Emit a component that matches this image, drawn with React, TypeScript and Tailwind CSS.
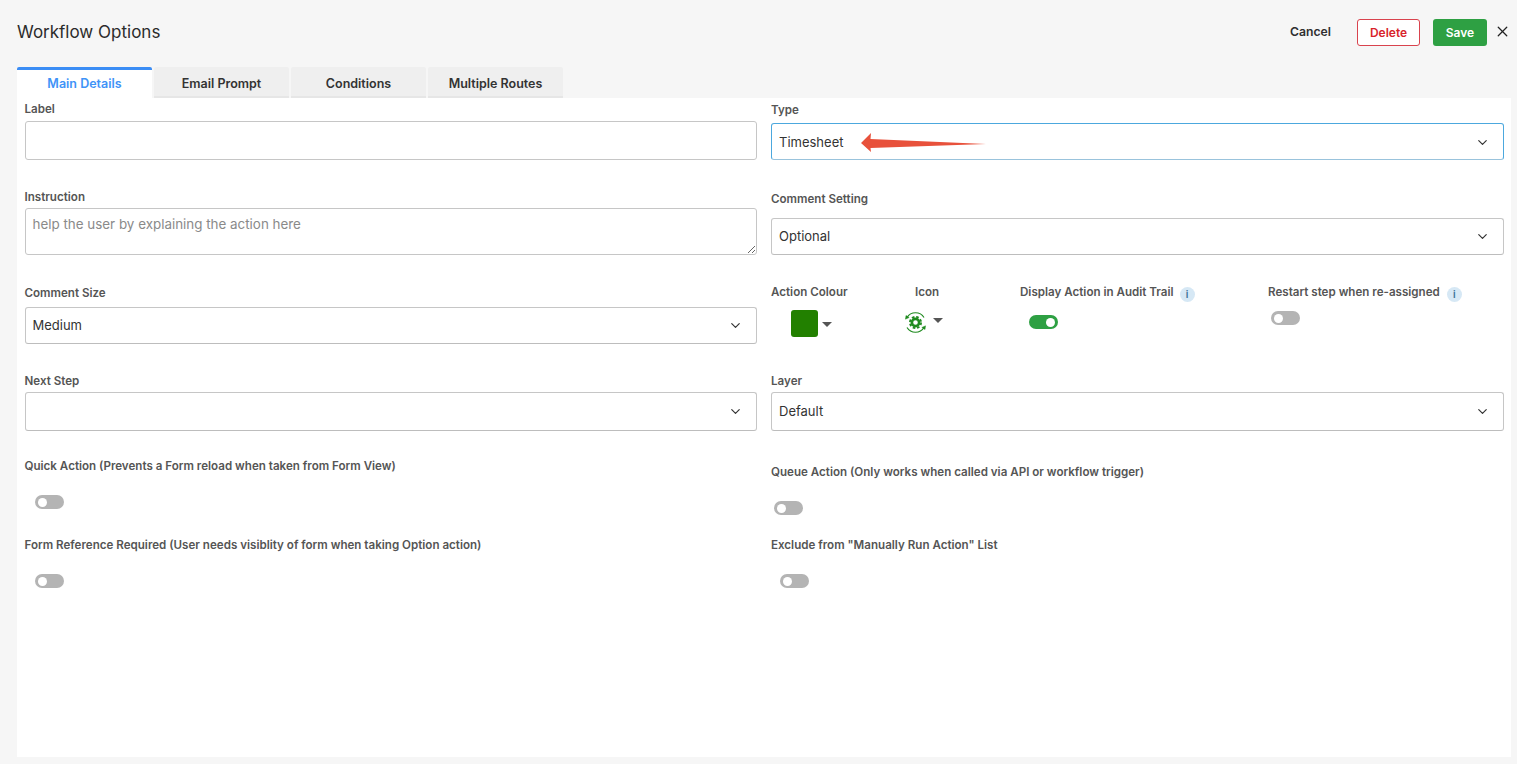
import { ChevronDown, X } from "lucide-react";

const Label = ({ children, className = "" }: { children: React.ReactNode; className?: string }) => (
  <div className={`h-4 text-[11.6px] leading-4 font-semibold text-[#555555] whitespace-nowrap ${className}`}>{children}</div>
);

const Select = ({ value, className = "border-[#c6c6c6] border-b-[#bdbdbd]" }: { value?: string; className?: string }) => (
  <div className={`flex h-full items-center justify-between rounded-[3px] border bg-white pl-[7px] pr-[13px] text-[13px] text-[#333333] ${className}`}>
    <span>{value}</span>
    <ChevronDown size={15} strokeWidth={1.9} className="text-[#333333]" />
  </div>
);

const Toggle = ({ on = false, className = "" }: { on?: boolean; className?: string }) => (
  <div className={`flex h-[14px] w-[29px] items-center rounded-full px-[3px] ${on ? "justify-end bg-[#2ea043]" : "justify-start bg-[#b4b4b4]"} ${className}`}>
    <div className="h-[9px] w-[9px] rounded-full bg-white" />
  </div>
);

const Info = ({ className = "" }: { className?: string }) => (
  <span className={`flex h-[15px] w-[15px] items-center justify-center rounded-full bg-[#d6e8f5] text-[10px] font-semibold text-[#3a6f96] ${className}`}>i</span>
);

const Caret = ({ className = "" }: { className?: string }) => (
  <div className={`h-0 w-0 border-x-[5px] border-t-[5px] border-x-transparent border-t-[#555555] ${className}`} />
);

const GearCycle = () => (
  <svg width="22" height="24" viewBox="0 0 22 24" fill="none" stroke="#1f8a1f">
    <circle cx="10.5" cy="11.5" r="3.6" strokeWidth="2.6" />
    <circle cx="10.5" cy="11.5" r="5.6" strokeWidth="1.8" strokeDasharray="2.6 1.8" />
    <path d="M2 6.5A10 10 0 0 1 19 6.5" strokeWidth="1.2" />
    <path d="M19 16.5A10 10 0 0 1 2 16.5" strokeWidth="1.2" />
    <path d="M0.4 8.2L1 4.4L4.2 6.6Z" fill="#1f8a1f" strokeWidth="0.4" />
    <path d="M20.6 14.8L20 18.6L16.8 16.4Z" fill="#1f8a1f" strokeWidth="0.4" />
  </svg>
);

const tabs = ["Email Prompt", "Conditions", "Multiple Routes"];

export default function App() {
  return (
    <div className="flex h-screen w-full flex-col overflow-hidden bg-[#f6f6f6] pb-[7px] pl-[17px] pr-[6px] font-['Inter',sans-serif]">
      <header className="flex h-[67px] shrink-0 items-start justify-between">
        <h1 className="mt-[21px] text-[17px] leading-[22px] font-normal text-[#2b2b2b]">Workflow Options</h1>
        <div className="mt-[19px] flex items-start">
          <button className="mr-[26px] h-[27px] text-[12.2px] font-semibold text-[#2f2f2f]">Cancel</button>
          <button className="mr-[13px] h-[27px] w-[63px] rounded-[3px] border border-[#d9434e] bg-white text-[12px] font-semibold text-[#d8232a]">Delete</button>
          <button className="mr-[7px] h-[27px] w-[54px] rounded-[3px] bg-[#2ea043] text-[12px] font-semibold text-white">Save</button>
          <X size={17} strokeWidth={1.8} className="mt-[4px] text-[#222222]" />
        </div>
      </header>

      <nav className="flex h-[31px] shrink-0 items-start gap-[2px]">
        <div className="flex h-[31px] w-[135px] items-center justify-center rounded-t-[2px] border-t-[3px] border-[#3b8df5] bg-white text-[12.5px] font-semibold text-[#3f93f7]">
          Main Details
        </div>
        {tabs.map((t) => (
          <div key={t} className="flex h-[31px] w-[135px] items-center justify-center rounded-t-[2px] border-b-2 border-[#e6e6e6] bg-[#efefef] pt-[5px] text-[12.5px] font-semibold text-[#333333]">
            {t}
          </div>
        ))}
      </nav>

      <main className="flex flex-1 gap-[14px] bg-white pl-[7.5px] pr-[7px]">
        {/* left column */}
        <section className="w-[732.5px] pt-[3px]">
          <Label>Label</Label>
          <input className="mt-[4px] block h-[39px] w-full rounded-[3px] border border-[#c6c6c6] bg-white" />

          <Label className="mt-[29px]">Instruction</Label>
          <textarea
            placeholder="help the user by explaining the action here"
            className="mt-[3px] block h-[47px] w-full rounded-[3px] border border-[#c6c6c6] bg-white px-[7px] py-[6px] text-[13.4px] leading-[18px] placeholder:text-[#8a8a8a]"
          />

          <Label className="mt-[30px]">Comment Size</Label>
          <div className="mt-[6px] h-[37px]">
            <Select value="Medium" />
          </div>

          <Label className="mt-[29px]">Next Step</Label>
          <div className="mt-[3px] h-[39px]">
            <Select />
          </div>

          <Label className="mt-[27px]">Quick Action (Prevents a Form reload when taken from Form View)</Label>
          <Toggle className="ml-[10px] mt-[21px]" />

          <Label className="mt-[28px]">Form Reference Required (User needs visiblity of form when taking Option action)</Label>
          <Toggle className="ml-[10px] mt-[21px]" />
        </section>

        {/* right column */}
        <section className="w-[733px] pt-[4px]">
          <Label>Type</Label>
          <div className="relative mt-[5px] h-[37px]">
            <Select value="Timesheet" className="border-sky-600/70 border-b-sky-700/40 pt-[2px]" />
            <svg className="absolute left-[89px] top-[9px]" width="126" height="21" viewBox="0 0 126 21">
              <path d="M1 11L11 1L10.5 7L126 12L10.5 16L11 20Z" fill="#e8513b" />
            </svg>
          </div>

          <Label className="mt-[31px]">Comment Setting</Label>
          <div className="mt-[11px] h-[37px]">
            <Select value="Optional" />
          </div>

          <div className="mt-[29px] flex h-[89px] items-start">
            <div className="w-[134px]">
              <Label>Action Colour</Label>
              <div className="ml-5 mt-[10px] flex items-center gap-[4px]">
                <div className="h-[27px] w-[27px] rounded-[3px] bg-[#228000]" />
                <Caret className="mt-[2px]" />
              </div>
            </div>
            <div className="w-[115px]">
              <Label className="pl-[10px]">Icon</Label>
              <div className="mt-[11px] flex items-start gap-[6px]">
                <GearCycle />
                <Caret className="mt-[7px]" />
              </div>
            </div>
            <div className="w-[248px]">
              <div className="flex items-start gap-[6px]">
                <Label>Display Action in Audit Trail</Label>
                <Info className="mt-[3px]" />
              </div>
              <Toggle on className="ml-[9px] mt-[13px]" />
            </div>
            <div>
              <div className="flex items-start gap-[7px]">
                <Label>Restart step when re-assigned</Label>
                <Info className="mt-[3px]" />
              </div>
              <Toggle className="ml-[3px] mt-[9px]" />
            </div>
          </div>

          <Label>Layer</Label>
          <div className="mt-[3px] h-[39px]">
            <Select value="Default" />
          </div>

          <Label className="mt-[33px]">Queue Action (Only works when called via API or workflow trigger)</Label>
          <Toggle className="ml-[3px] mt-[21px]" />

          <Label className="mt-[22px]">Exclude from "Manually Run Action" List</Label>
          <Toggle className="ml-[9px] mt-[21px]" />
        </section>
      </main>
    </div>
  );
}
